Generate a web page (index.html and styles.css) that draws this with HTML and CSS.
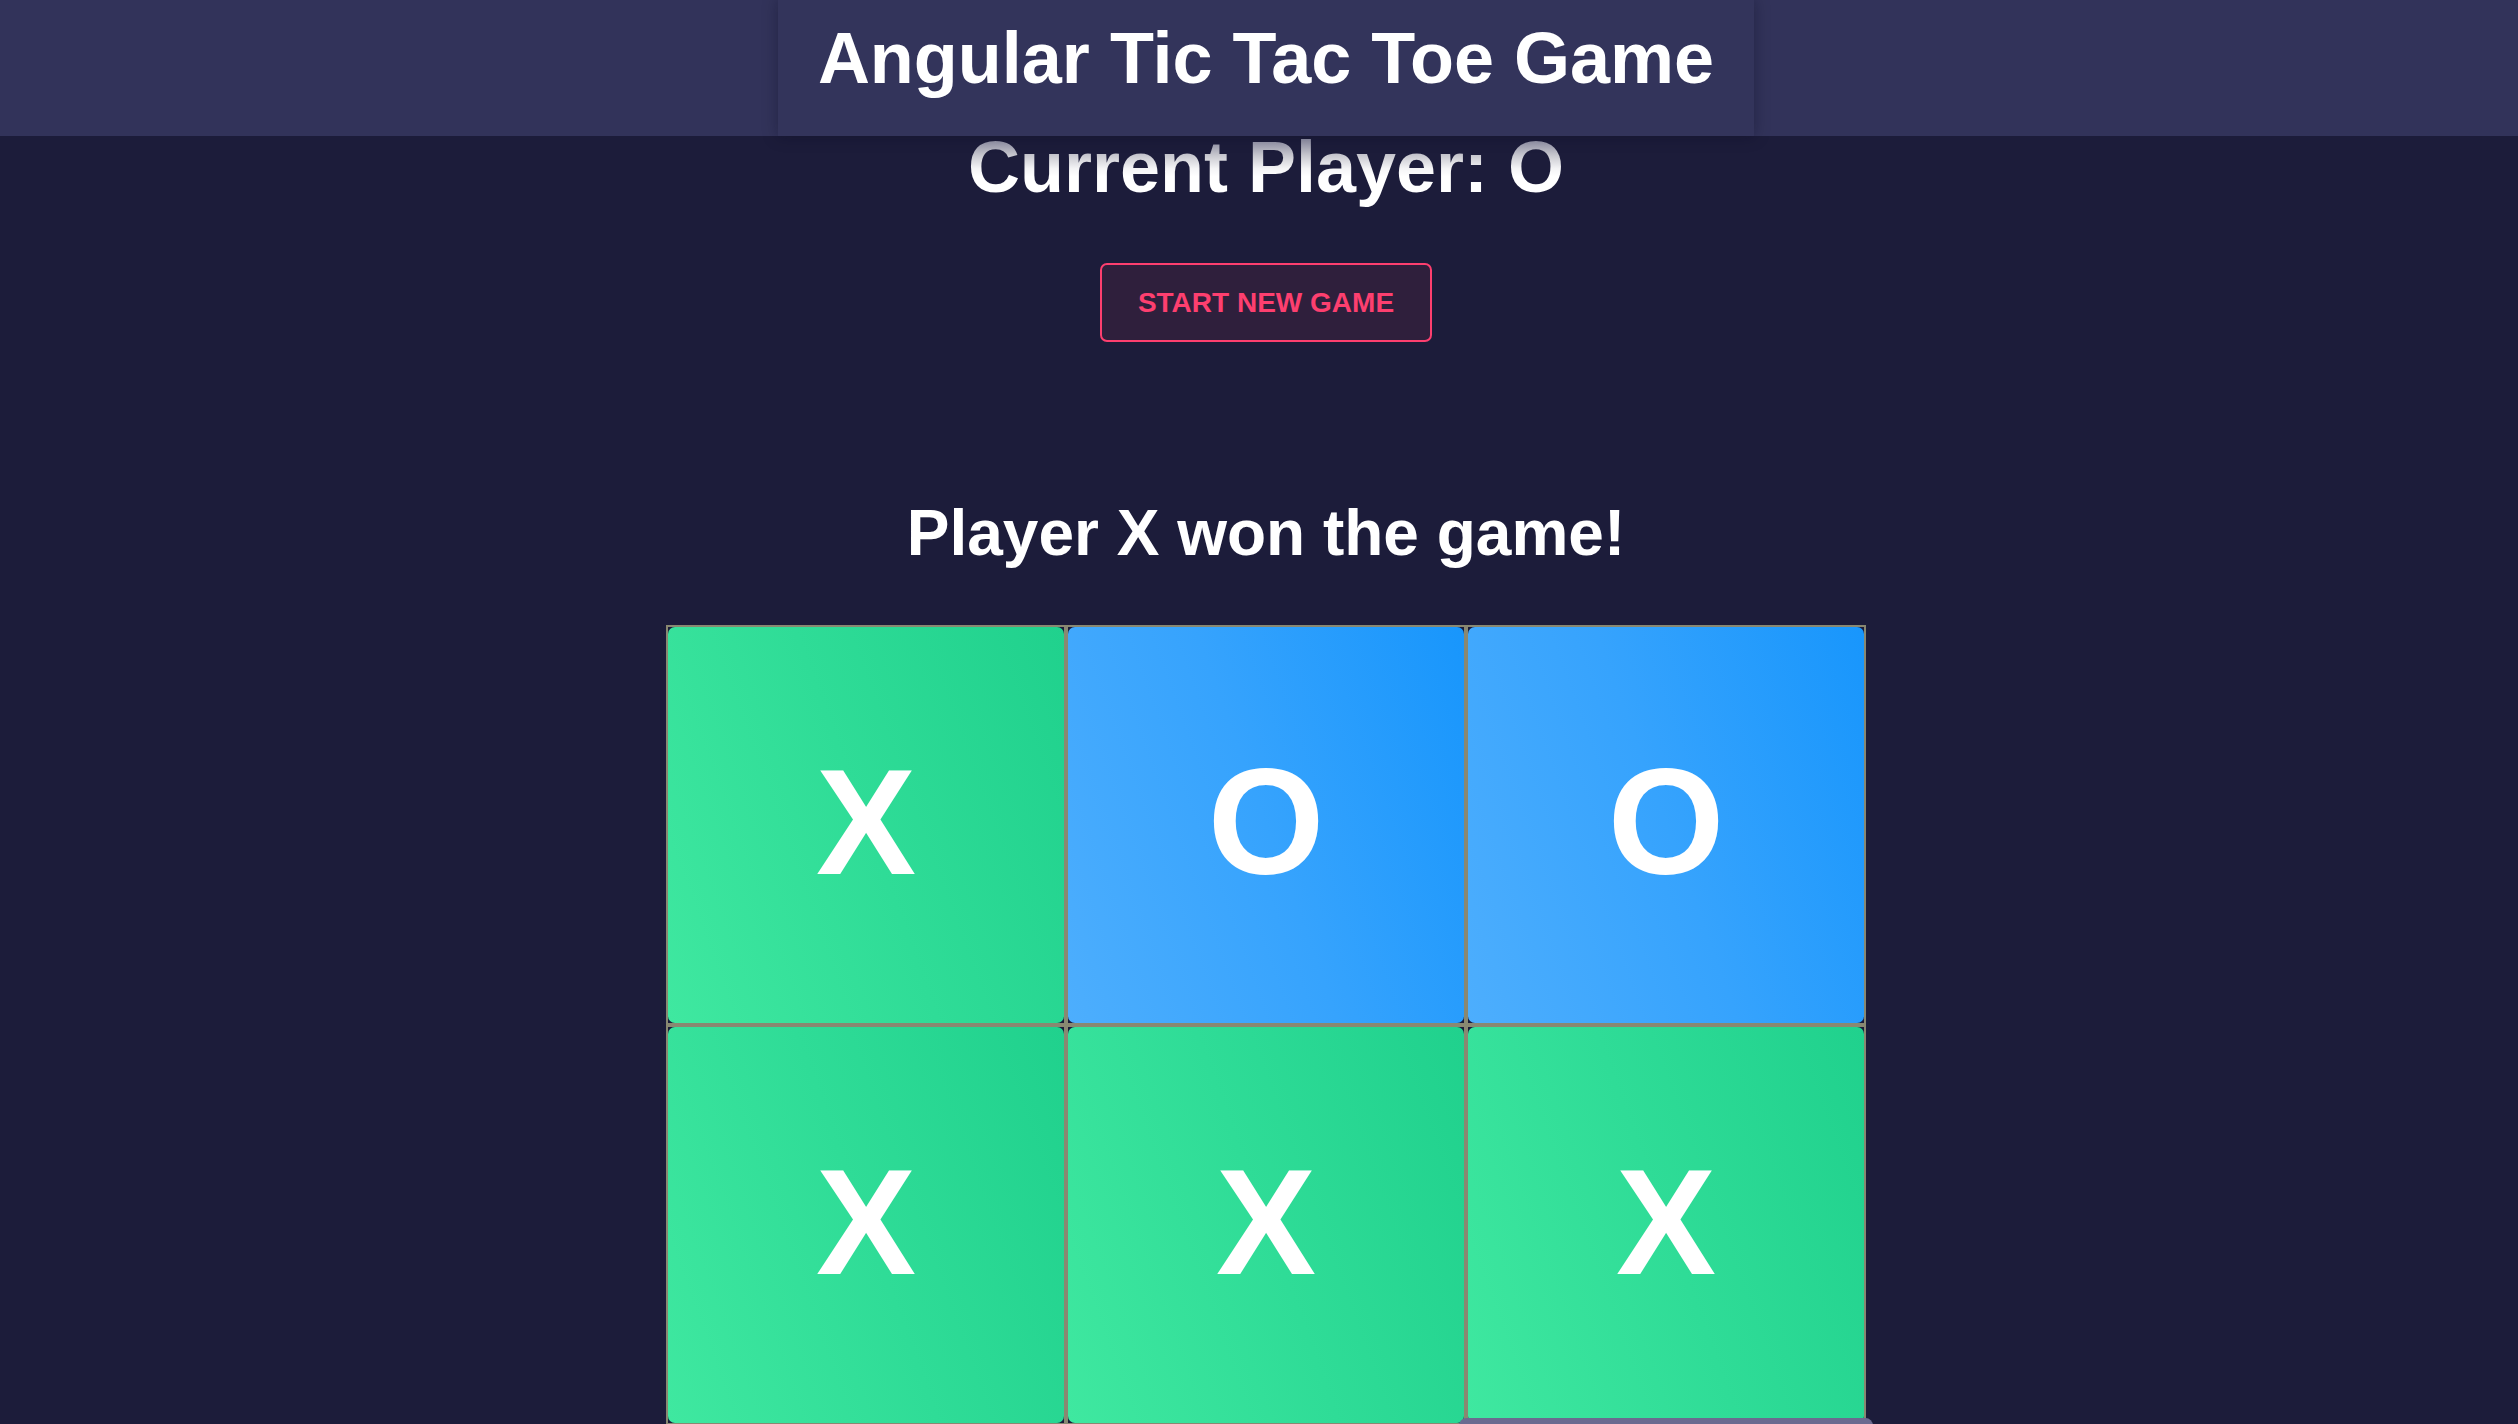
FILE: index.html
```html
<!DOCTYPE html>
<html lang="en">
<head>
<meta charset="utf-8">
<title>Angular Tic Tac Toe Game</title>
<link rel="stylesheet" href="styles.css">
</head>
<body>
<header class="topbar">
  <div class="title-box"><h1 class="title">Angular Tic Tac Toe Game</h1></div>
</header>
<main class="game">
  <h2 class="current">Current Player: O</h2>
  <button class="new-game" type="button">START NEW GAME</button>
  <h3 class="winner">Player X won the game!</h3>
  <div class="board">
    <div class="cell"><div class="mark mark-x">X</div></div>
    <div class="cell"><div class="mark mark-o">O</div></div>
    <div class="cell"><div class="mark mark-o">O</div></div>
    <div class="cell"><div class="mark mark-x">X</div></div>
    <div class="cell"><div class="mark mark-x">X</div></div>
    <div class="cell"><div class="mark mark-x">X</div></div>
    <div class="cell"><div class="mark mark-empty"></div></div>
    <div class="cell"><div class="mark mark-empty"></div></div>
    <div class="cell"><div class="mark mark-empty is-hover"></div></div>
  </div>
</main>
</body>
</html>
```

FILE: styles.css
```css
html {
  overflow: hidden;
}
body {
  margin: 0;
  background: #1c1c3a;
  font-family: "Liberation Sans", Arial, Helvetica, sans-serif;
  color: #ffffff;
}
.topbar {
  height: 136px;
  background: #32335a;
  display: flex;
  justify-content: center;
  padding-left: 14px;
}
.title-box {
  height: 136px;
  box-sizing: border-box;
  padding: 18px 40px 38px;
  background: #33345b;
  box-shadow: 0 0 14px rgba(10, 10, 30, 0.35);
}
.title {
  margin: 0;
  font-size: 72px;
  line-height: 80px;
  font-weight: 700;
  white-space: nowrap;
}
.game {
  display: flex;
  flex-direction: column;
  align-items: center;
  padding-left: 14px;
}
.current {
  margin: -9px 0 0;
  font-size: 72px;
  line-height: 80px;
  font-weight: 700;
  white-space: nowrap;
  background: linear-gradient(to bottom, #85859a 16%, #c9c9d0 36%, #f4f4f6 52%, #ffffff 62%);
  -webkit-background-clip: text;
  background-clip: text;
  color: transparent;
}
.new-game {
  margin-top: 56px;
  height: 79px;
  box-sizing: border-box;
  padding: 0 36px;
  border: 2px solid #fd3f6f;
  border-radius: 7px;
  background: #2f1f3c;
  color: #fd3f6f;
  font-family: inherit;
  font-size: 28px;
  font-weight: 700;
  display: inline-flex;
  align-items: center;
  justify-content: center;
}
.winner {
  margin: 159px 0 0;
  font-size: 64px;
  line-height: 64px;
  font-weight: 700;
  white-space: nowrap;
}
.board {
  margin-top: 60px;
  display: grid;
  grid-template-columns: repeat(3, 400px);
  grid-auto-rows: 400px;
}
.cell {
  border: 2px solid #898871;
  box-sizing: border-box;
}
.mark {
  height: 100%;
  box-sizing: border-box;
  padding-bottom: 6px;
  border-radius: 7px;
  display: flex;
  align-items: center;
  justify-content: center;
  font-size: 150px;
  font-weight: 700;
  color: #ffffff;
}
.mark-x {
  background: linear-gradient(70deg, #3fe8a0 0%, #2fdc97 50%, #20d18d 100%);
}
.mark-o {
  background: linear-gradient(70deg, #4daefd 0%, #36a3fd 50%, #1896fc 100%);
}
.mark-empty {
  background: #6b6a90;
}
.is-hover {
  transform: scale(1.045);
}
```
